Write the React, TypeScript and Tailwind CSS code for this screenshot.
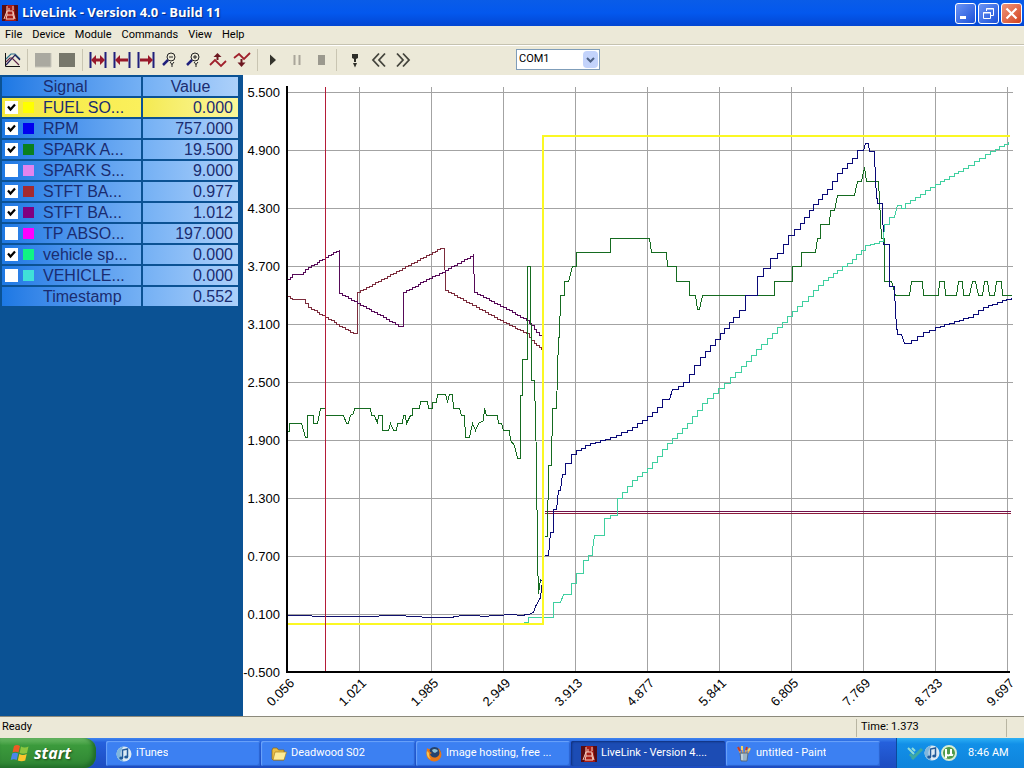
import { useState } from "react"
import type { ReactNode } from "react"

type Point = [number, number]

type Signal = {
  name: string
  value: string
  color: string
  checked: boolean
}

const signals: Signal[] = [
  { name: "FUEL SO...", value: "0.000", color: "bg-[#ffff00]", checked: true },
  { name: "RPM", value: "757.000", color: "bg-[#0000f0]", checked: true },
  { name: "SPARK A...", value: "19.500", color: "bg-[#0a8020]", checked: true },
  { name: "SPARK S...", value: "9.000", color: "bg-[#e284ee]", checked: false },
  { name: "STFT BA...", value: "0.977", color: "bg-[#a52a2f]", checked: true },
  { name: "STFT BA...", value: "1.012", color: "bg-[#800080]", checked: true },
  { name: "TP ABSO...", value: "197.000", color: "bg-[#ff00ff]", checked: false },
  { name: "vehicle sp...", value: "0.000", color: "bg-[#10f584]", checked: true },
  { name: "VEHICLE...", value: "0.000", color: "bg-[#40e0d8]", checked: false },
]

const menus = ["File", "Device", "Module", "Commands", "View", "Help"]

const yLabels = ["5.500", "4.900", "4.300", "3.700", "3.100", "2.500", "1.900", "1.300", "0.700", "0.100", "-0.500"]
const xLabels = ["0.056", "1.021", "1.985", "2.949", "3.913", "4.877", "5.841", "6.805", "7.769", "8.733", "9.697"]

// Fuel trim before the loop opens
const purple: Point[] = [
  [287, 279], [292, 274], [300, 274], [308, 267], [325, 257], [339, 249], [339, 293], [357, 303], [380, 315],
  [398, 326], [403, 326], [403, 292], [432, 276], [445, 270], [473, 254], [474, 292], [503, 307], [526, 320],
  [531, 325], [536, 332], [542, 337],
]

const brown: Point[] = [
  [287, 296], [292, 299], [301, 299], [308, 307], [325, 317], [345, 329], [353, 333], [357, 333], [357, 292],
  [432, 252], [440, 248], [444, 248], [445, 290], [503, 322], [526, 333], [531, 340], [536, 345], [541, 349],
]

const rpmIdle: Point[] = [
  [287, 615], [305, 615], [318, 616], [345, 616], [372, 616], [385, 615], [398, 615], [412, 616], [430, 617],
  [450, 617], [462, 615], [475, 615], [483, 616], [495, 615], [512, 614], [520, 615], [528, 614], [533, 612],
  [535, 606], [540, 597], [542, 580], [539, 580],
]

const rpm: Point[] = [
  [544, 555], [548, 555], [550, 532], [553, 532], [553, 509], [556, 509], [558, 490], [560, 490], [562, 474],
  [565, 474], [565, 463], [571, 463], [571, 454], [576, 454], [576, 450], [585, 445], [610, 437], [627, 430],
  [647, 416], [662, 403], [662, 399], [669, 399], [672, 389], [683, 382], [700, 357], [720, 333], [733, 317],
  [745, 303], [745, 295], [751, 295], [757, 276], [763, 268], [770, 258], [777, 253], [788, 235], [800, 223],
  [813, 204], [827, 189], [837, 173], [852, 158], [857, 150], [863, 150], [865, 143], [868, 143], [869, 151],
  [874, 151], [875, 182], [877, 203], [882, 203], [883, 244], [889, 244], [889, 286], [894, 287], [895, 313],
  [897, 334], [901, 334], [904, 343], [911, 340], [923, 332], [935, 327], [968, 317], [983, 307], [1011, 297],
]

const sparkBefore: Point[] = [
  [287, 431], [289, 431], [289, 423], [301, 423], [305, 437], [307, 437], [307, 415], [313, 415], [313, 423],
  [317, 423], [320, 408], [325, 408], [325, 415], [343, 415], [346, 423], [348, 423], [350, 415], [353, 413],
  [354, 408], [370, 408], [371, 415], [374, 415], [377, 423], [378, 415], [382, 415], [382, 430], [388, 430],
  [390, 423], [393, 430], [396, 430], [397, 423], [402, 423], [403, 415], [405, 415], [406, 423], [410, 415],
  [412, 415], [412, 408], [419, 408], [420, 401], [427, 401], [428, 408], [432, 408], [432, 402], [436, 402],
  [437, 394], [445, 394], [447, 401], [449, 394], [452, 394], [453, 408], [459, 408], [461, 415], [464, 415],
  [465, 437], [469, 437], [472, 423], [475, 430], [478, 423], [483, 420], [484, 408], [486, 415], [497, 415],
  [498, 423], [501, 423], [503, 430], [509, 430], [510, 440], [514, 445], [517, 458], [520, 458], [520, 395],
  [522, 395], [522, 359], [527, 359], [527, 266], [530, 266], [531, 380], [534, 380], [536, 460], [537, 557],
  [538, 593], [540, 579],
]

const sparkAfter: Point[] = [
  [544, 536], [547, 536], [548, 465], [551, 465], [552, 408], [556, 408], [558, 337], [559, 337], [560, 295],
  [564, 295], [564, 281], [568, 281], [572, 266], [576, 266], [576, 252], [610, 252], [610, 238], [649, 238],
  [651, 252], [666, 252], [667, 266], [676, 266], [676, 281], [689, 281], [689, 295], [695, 295], [697, 309],
  [699, 309], [702, 295], [774, 295], [774, 281], [792, 281], [792, 266], [801, 266], [801, 252], [815, 252],
  [817, 238], [820, 238], [820, 224], [829, 224], [830, 210], [834, 210], [837, 195], [854, 195], [857, 181],
  [861, 181], [864, 167], [866, 181], [878, 181], [881, 238], [884, 238], [884, 281], [891, 281], [895, 295],
  [909, 295], [911, 281], [922, 281], [923, 295], [938, 295], [939, 281], [944, 281], [945, 295], [956, 295],
  [958, 281], [962, 281], [963, 295], [969, 295], [972, 281], [975, 281], [978, 295], [982, 295], [984, 281],
  [987, 281], [989, 295], [994, 295], [996, 281], [1001, 281], [1002, 295], [1011, 295],
]

const speed: Point[] = [
  [523, 622], [528, 617], [553, 617], [553, 602], [560, 602], [563, 594], [571, 594], [571, 583], [576, 573],
  [583, 560], [592, 549], [594, 535], [599, 535], [604, 518], [610, 515], [617, 498], [632, 480], [647, 468],
  [667, 443], [687, 423], [702, 403], [718, 388], [730, 377], [751, 355], [777, 327], [792, 311], [823, 280],
  [847, 263], [865, 245], [883, 240], [884, 224], [889, 217], [894, 217], [897, 205], [901, 208], [905, 208],
  [905, 203], [935, 184], [963, 168], [990, 151], [1008, 141],
]

// Plain line through the points
const line = (points: Point[]) => points.map(([x, y]) => `${x},${y}`).join(" ")

// Sampled line: sloped runs longer than one sample become steps
const stairs = (points: Point[], step: number) => {
  const out: Point[] = [points[0]]
  for (let i = 1; i < points.length; i++) {
    const [x0, y0] = points[i - 1]
    const [x1, y1] = points[i]
    const n = Math.round((x1 - x0) / step)
    if (n < 1 || y0 === y1 || x1 - x0 < 4) {
      out.push([x1, y1])
      continue
    }
    for (let k = 1; k <= n; k++) {
      const x = Math.round(x0 + ((x1 - x0) * k) / n)
      const y = Math.round(y0 + ((y1 - y0) * k) / n)
      out.push([x, out[out.length - 1][1]])
      out.push([x, y])
    }
  }
  return line(out)
}

function Chart() {
  return (
    <svg viewBox="243 75 781 641" className="block h-auto w-full bg-white" role="img" aria-label="Signal chart">
      <g stroke="#a3a3a3" strokeWidth="1" shapeRendering="crispEdges">
        {yLabels.slice(0, -1).map((label, i) => (
          <line key={label} x1="287" x2="1013" y1={92.5 + i * 58} y2={92.5 + i * 58} />
        ))}
        {xLabels.slice(1).map((label, i) => (
          <line key={label} x1={359.5 + i * 72} x2={359.5 + i * 72} y1="87" y2="672" />
        ))}
      </g>
      <g fill="none" strokeWidth="1" shapeRendering="crispEdges" transform="translate(0.5 0.5)">
        <polyline points={stairs(brown, 3)} stroke="#7c2c3c" />
        <polyline points={stairs(purple, 3)} stroke="#560a58" />
        <polyline points="544,511 1010,511" stroke="#70104c" />
        <polyline points="544,513 1010,513" stroke="#8c1c3c" />
        <polyline points={line(sparkBefore)} stroke="#156b20" />
        <polyline points={line(sparkAfter)} stroke="#156b20" />
        <polyline points={line(rpmIdle)} stroke="#10106e" />
        <polyline points={stairs(rpm, 5)} stroke="#0a0a78" />
        <polyline points={stairs(speed, 5)} stroke="#3fd0a0" />
      </g>
      <polyline points="288,624 543,624 543,136 1010,136" fill="none" stroke="#fbf824" strokeWidth="2" shapeRendering="crispEdges" />
      <rect x="325" y="87" width="1" height="585" fill="#b41c38" shapeRendering="crispEdges" />
      <path d="M287 86V672H1010" fill="none" stroke="#000" strokeWidth="2" shapeRendering="crispEdges" />
      <g fontFamily="Liberation Sans, Arial, sans-serif" fontSize="13" fill="#000" textAnchor="end">
        {yLabels.map((label, i) => (
          <text key={label} x="280" y={97 + i * 58}>{label}</text>
        ))}
        {xLabels.map((label, i) => (
          <text key={label} transform={`translate(${295 + i * 72} 684) rotate(-45)`}>{label}</text>
        ))}
      </g>
    </svg>
  )
}

function LiveLinkIcon() {
  return (
    <svg viewBox="0 0 16 16" className="size-4 shrink-0" aria-hidden="true">
      <rect width="16" height="16" fill="#a81c14" />
      <path d="M0 0H5L3 16H0zM12 0H16V16H14z" fill="#5a0c10" />
      <path d="M5 1V6M11 1V5M5 6L2 14M11 7L13 14M5 6H11V10H5zM5 10L4 14H12L11 10M7 3V6" fill="none" stroke="#f6cfc0" strokeWidth="1" />
    </svg>
  )
}

function NoteIcon() {
  return (
    <svg viewBox="0 0 16 16" className="size-4 shrink-0" aria-hidden="true">
      <circle cx="8" cy="8" r="7.5" fill="#dceaf4" />
      <path d="M8 .5A7.500 7.500 0 0 0 8 15.500A10 10 0 0 1 8 .5z" fill="#7fb6dd" />
      <path d="M6.500 12V4L11.500 3V11" fill="none" stroke="#225b9b" strokeWidth="1.500" />
      <ellipse cx="5.200" cy="12" rx="2" ry="1.500" fill="#225b9b" />
      <ellipse cx="10.200" cy="11" rx="2" ry="1.500" fill="#225b9b" />
    </svg>
  )
}

function FolderIcon() {
  return (
    <svg viewBox="0 0 16 16" className="size-4 shrink-0" aria-hidden="true">
      <path d="M1 4L2 2H6L7.500 4H13V14H2L1 13z" fill="#e9bd45" stroke="#8a6410" strokeWidth=".7" />
      <path d="M4 6H15.500L13 14H2z" fill="#fdeb96" stroke="#a97f1c" strokeWidth=".7" />
    </svg>
  )
}

function FirefoxIcon() {
  return (
    <svg viewBox="0 0 16 16" className="size-4 shrink-0" aria-hidden="true">
      <circle cx="8.500" cy="7.500" r="6.500" fill="#26426b" />
      <path d="M6 4C8 2 11 3 12 5L9 7L7 6z" fill="#8fc0d4" />
      <path d="M1 2C2 3 3 3 4 3C3 5 4 6 6 7L4 8C5 12 10 13 13 9C14 7 13 4 12 2C16 5 17 11 12 14.500C7 17 1 14 .5 9C.2 6 1 4 1 2z" fill="#e87817" />
      <path d="M1 5C0 9 2 12 5 13.500C3 11 3 9 3 7z" fill="#f8c34b" />
    </svg>
  )
}

function PaintIcon() {
  return (
    <svg viewBox="0 0 16 16" className="size-4 shrink-0" aria-hidden="true">
      <path d="M5 8L2 2M7 8L6 1M9 8L11 1M11 8L14 3" stroke="#d9a060" strokeWidth="1.600" />
      <path d="M2 1L4 5M11 1L10 4" stroke="#c83a28" strokeWidth="2" />
      <path d="M6 0V4M14 2L12 5" stroke="#f1d463" strokeWidth="2" />
      <path d="M4 7H12L11 15H5z" fill="#9db4c4" stroke="#52616e" strokeWidth=".8" />
      <path d="M6 8V14" stroke="#e6f0f4" />
    </svg>
  )
}

function WindowsFlag() {
  return (
    <svg viewBox="0 0 20 18" className="h-[18px] w-5 shrink-0" aria-hidden="true">
      <path d="M4 2Q7 0 10 2L8.500 8.500Q5.500 7 2.500 8.500z" fill="#ee5a24" />
      <path d="M11 2.500Q14.500 4.500 18.500 2.500L17 9Q13 10.500 9.600 9z" fill="#8cc63f" />
      <path d="M2.200 9.600Q5 8 8.200 9.600L6.700 16Q3.700 14.500 .7 16z" fill="#4b86ea" />
      <path d="M9.300 10Q13 12 16.700 10L15.200 16.500Q11.500 18 7.800 16.500z" fill="#fbc52d" />
    </svg>
  )
}

function ToolButton({ label, children }: { label: string; children: ReactNode }) {
  return (
    <button type="button" aria-label={label} title={label} className="flex h-6 w-6 items-center justify-center">
      <svg viewBox="0 0 18 18" className="size-[18px]" fill="none" aria-hidden="true">
        {children}
      </svg>
    </button>
  )
}

function Separator() {
  return (
    <div className="flex w-[7px] justify-center">
      <div className="h-[22px] w-px bg-[#c9c5b2]" />
    </div>
  )
}

function Toolbar() {
  return (
    <div className="flex h-[30px] items-center border-t border-white bg-[#ece9d8] pb-[2px]">
      <ToolButton label="Chart">
        <path d="M2.500 2V15.500H17" stroke="#111" />
        <path d="M3 8L8 3L12 3L17 8" stroke="#2a6f8a" strokeWidth="1.200" />
        <path d="M3 14L12 4L17 9" stroke="#23205a" strokeWidth="1.200" />
        <path d="M3 11L7 7H9L16 14" stroke="#5c2348" strokeWidth="1.200" />
      </ToolButton>
      <Separator />
      <ToolButton label="Light panel">
        <path d="M1 2H17V16H1z" fill="#aaa9a0" />
        <path d="M1 16H17V2" stroke="#c8c6ba" />
      </ToolButton>
      <ToolButton label="Dark panel">
        <path d="M1 2H17V16H1z" fill="#77776b" />
      </ToolButton>
      <Separator />
      <ToolButton label="Expand both">
        <path d="M1.500 1V17M16.500 1V17" stroke="#20207c" strokeWidth="2" />
        <path d="M2 9L7 4V7.500H11V4L16 9L11 14V10.500H7V14z" fill="#98182a" />
      </ToolButton>
      <ToolButton label="Expand left">
        <path d="M1.500 1V17M16.500 1V17" stroke="#20207c" strokeWidth="2" />
        <path d="M2 9L7 4V7.500H15V10.500H7V14z" fill="#98182a" />
      </ToolButton>
      <ToolButton label="Expand right">
        <path d="M1.500 1V17M16.500 1V17" stroke="#20207c" strokeWidth="2" />
        <path d="M16 9L11 4V7.500H3V10.500H11V14z" fill="#98182a" />
      </ToolButton>
      <ToolButton label="Zoom out">
        <circle cx="10" cy="6" r="4" stroke="#222" />
        <path d="M8 6H12M9 11L11 13.500L13 11M11 13V16" stroke="#222" />
        <path d="M7 9L2 14" stroke="#20207c" strokeWidth="2.500" />
      </ToolButton>
      <ToolButton label="Zoom in">
        <circle cx="10" cy="6" r="4" stroke="#222" />
        <path d="M8 6H12M10 4V8M9 11L11 13.500L13 11M11 13V16" stroke="#222" />
        <path d="M7 9L2 14" stroke="#20207c" strokeWidth="2.500" />
      </ToolButton>
      <ToolButton label="Shift up">
        <path d="M1 14L6 9L12 15L17 10" stroke="#a0202c" strokeWidth="1.800" />
        <path d="M4.500 6L8.500 2L12.500 6z" fill="#6c1720" />
        <path d="M8.500 5V9" stroke="#6c1720" strokeWidth="2" />
      </ToolButton>
      <ToolButton label="Shift down">
        <path d="M1 7L6 3L11 8L17 2" stroke="#a0202c" strokeWidth="1.800" />
        <path d="M4.500 11.500L8.500 16L12.500 11.500z" fill="#6c1720" />
        <path d="M8.500 8V12" stroke="#6c1720" strokeWidth="2" />
      </ToolButton>
      <Separator />
      <ToolButton label="Play">
        <path d="M6 3.500L12 9L6 14.500z" fill="#33332c" />
      </ToolButton>
      <ToolButton label="Pause">
        <path d="M6.500 4V14M11.500 4V14" stroke="#a9a69a" strokeWidth="2" />
      </ToolButton>
      <ToolButton label="Stop">
        <path d="M6 4H13V14H6z" fill="#9b998e" />
      </ToolButton>
      <Separator />
      <div className="flex pl-[3px]">
        <ToolButton label="Mark event">
          <path d="M6 3H12V7L10 8V11H8V8L6 7z" fill="#2e2e28" />
          <path d="M7 12H11L9 16.500z" fill="#2e2e28" />
        </ToolButton>
        <ToolButton label="Rewind">
          <path d="M9 2.500L3 9L9 15.500M15 2.500L9 9L15 15.500" stroke="#44443c" strokeWidth="1.800" />
        </ToolButton>
        <ToolButton label="Fast forward">
          <path d="M3 2.500L9 9L3 15.500M9 2.500L15 9L9 15.500" stroke="#44443c" strokeWidth="1.800" />
        </ToolButton>
      </div>
      <div className="relative ml-[101px]">
        <select aria-label="Port" defaultValue="COM1" className="block h-[21px] w-[84px] appearance-none border border-[#7f9db9] bg-white pl-[2px] text-[11px] text-black">
          <option>COM1</option>
          <option>COM2</option>
        </select>
        <span className="pointer-events-none absolute inset-y-[2px] right-[2px] flex w-[15px] items-center justify-center rounded-sm bg-[#c3d3fb]">
          <svg viewBox="0 0 9 6" className="h-[6px] w-[9px]" fill="none" aria-hidden="true">
            <path d="M1 1L4.500 4.500L8 1" stroke="#4d6185" strokeWidth="2" />
          </svg>
        </span>
      </div>
    </div>
  )
}

function SignalTable() {
  const [checked, setChecked] = useState(signals.map((s) => s.checked))

  const toggle = (index: number) => {
    setChecked(checked.map((value, i) => (i === index ? !value : value)))
  }

  return (
    <table className="w-[240px] table-fixed border-separate border-spacing-x-[2px] border-spacing-y-[2px] text-base leading-[19px] text-[#1a2c70]">
      <colgroup>
        <col className="w-[139px]" />
        <col />
      </colgroup>
      <thead>
        <tr>
          <th className="h-[19px] bg-linear-to-r from-[#1c78e4] to-[#74b0f4] p-0 pl-[41px] text-left font-normal">Signal</th>
          <th className="bg-linear-to-r from-[#74b0f4] to-[#acd0fa] p-0 font-normal">Value</th>
        </tr>
      </thead>
      <tbody>
        {signals.map((signal, i) => (
          <tr key={i}>
            <td className={`h-[19px] p-0 bg-linear-to-r ${i === 0 ? "from-[#f4e83e] to-[#fbf05c]" : "from-[#1c78e4] to-[#74b0f4]"}`}>
              <label className="flex items-center overflow-hidden whitespace-nowrap pl-[3px]">
                <span className="relative size-[13px] shrink-0">
                  <input
                    type="checkbox"
                    checked={checked[i]}
                    onChange={() => toggle(i)}
                    className="block size-[13px] appearance-none bg-white"
                  />
                  {checked[i] && (
                    <svg viewBox="0 0 13 13" className="pointer-events-none absolute inset-0 size-[13px]" fill="none" aria-hidden="true">
                      <path d="M3 5.500L5.500 8.500L10 3.500" stroke="#000" strokeWidth="2.200" />
                    </svg>
                  )}
                </span>
                <span className={`ml-[5px] size-[11px] shrink-0 ${signal.color}`} />
                <span className="ml-[9px]">{signal.name}</span>
              </label>
            </td>
            <td className={`p-0 pr-[5px] text-right bg-linear-to-r ${i === 0 ? "from-[#f4ea50] to-[#fbf79a]" : "from-[#74b0f4] to-[#acd0fa]"}`}>
              {signal.value}
            </td>
          </tr>
        ))}
        <tr>
          <td className="h-[19px] bg-linear-to-r from-[#1c78e4] to-[#74b0f4] p-0 pl-[41px]">Timestamp</td>
          <td className="bg-linear-to-r from-[#74b0f4] to-[#acd0fa] p-0 pr-[5px] text-right">0.552</td>
        </tr>
      </tbody>
    </table>
  )
}

function TitleBar() {
  const button = "flex size-[21px] items-center justify-center rounded-[3px] border border-white"
  return (
    <header className="flex h-[26px] items-center bg-linear-to-b from-[#0a5ce8] via-[#0358ee] to-[#0346d2] pl-[2px] pr-[2px] text-white">
      <LiveLinkIcon />
      <h1 className="ml-1 flex-1 font-[Open_Sans,sans-serif] text-[13px] font-bold [text-shadow:1px_1px_1px_#0a2a80]">
        LiveLink - Version 4.0 - Build 11
      </h1>
      <div className="flex gap-[2px]">
        <button type="button" aria-label="Minimize" className={`${button} bg-linear-to-br from-[#6c94f4] to-[#1a4fd8]`}>
          <svg viewBox="0 0 17 17" className="size-[17px]" aria-hidden="true"><path d="M3 11H9V14H3z" fill="#fff" /></svg>
        </button>
        <button type="button" aria-label="Restore" className={`${button} bg-linear-to-br from-[#6c94f4] to-[#1a4fd8]`}>
          <svg viewBox="0 0 17 17" className="size-[17px]" fill="none" stroke="#fff" aria-hidden="true">
            <path d="M6.500 6V3.500H13.500V10.500H11M6 4H14M3.500 7.500H10.500V13.500H3.500zM3 8H11" />
          </svg>
        </button>
        <button type="button" aria-label="Close" className={`${button} bg-linear-to-br from-[#ee9478] to-[#d2401a]`}>
          <svg viewBox="0 0 17 17" className="size-[17px]" stroke="#fff" strokeWidth="2.200" aria-hidden="true"><path d="M3.500 3.500L13.500 13.500M13.500 3.500L3.500 13.500" /></svg>
        </button>
      </div>
    </header>
  )
}

const tasks = [
  { title: "iTunes", icon: <NoteIcon />, active: false },
  { title: "Deadwood S02", icon: <FolderIcon />, active: false },
  { title: "Image hosting, free ...", icon: <FirefoxIcon />, active: false },
  { title: "LiveLink - Version 4....", icon: <LiveLinkIcon />, active: true },
  { title: "untitled - Paint", icon: <PaintIcon />, active: false },
]

function Taskbar() {
  return (
    <footer className="flex h-[30px] bg-linear-to-b from-[#3f84f0] via-[#2560dc] via-15% to-[#1d4cc0] text-[11px] text-white">
      <button
        type="button"
        className="flex w-24 shrink-0 items-center gap-1 rounded-r-xl bg-linear-to-b from-[#6bbb66] via-[#3b9a3c] via-25% to-[#2f8433] pl-[10px] shadow-[inset_-3px_-2px_4px_#1f6a28]"
      >
        <WindowsFlag />
        <span className="font-[Open_Sans,sans-serif] text-base leading-5 font-bold italic [text-shadow:1px_1px_2px_#1c4a1c]">start</span>
      </button>
      <nav className="ml-[10px] flex min-w-0 flex-1 gap-px pt-[3px] pb-[2px]">
        {tasks.map((task) => (
          <button
            key={task.title}
            type="button"
            className={`flex min-w-0 max-w-[154px] flex-1 items-center gap-1 rounded-[2px] pl-[10px] ${
              task.active
                ? "bg-[#1c4cb4] shadow-[inset_1px_1px_2px_#10307c]"
                : "bg-[#3c80f2] shadow-[inset_1px_1px_1px_#6ca4fa,inset_-1px_-1px_1px_#2a62d0]"
            }`}
          >
            {task.icon}
            <span className="truncate">{task.title}</span>
          </button>
        ))}
      </nav>
      <div className="flex w-32 shrink-0 items-center border-l border-[#0c4a9c] bg-linear-to-b from-[#2cb0f4] via-[#1290e8] via-20% to-[#0f84dc] pl-[10px]">
        <svg viewBox="0 0 16 16" className="size-4" fill="none" aria-hidden="true">
          <path d="M1 3L7 9M5 3L8 6" stroke="#8fdcd8" strokeWidth="2" />
          <path d="M5 14L15 4M3 9L7 13" stroke="#3fa8a0" strokeWidth="3" />
        </svg>
        <div className="ml-px"><NoteIcon /></div>
        <svg viewBox="0 0 16 16" className="ml-px size-4" fill="none" aria-hidden="true">
          <circle cx="8" cy="8" r="7" fill="#4e9a48" stroke="#d8ecd2" strokeWidth="2" />
          <path d="M5 13V4M5 9Q7 12 10 9V4M10 9L12 10.500" stroke="#fff" strokeWidth="2" />
        </svg>
        <time className="ml-[11px]">8:46 AM</time>
      </div>
    </footer>
  )
}

export default function App() {
  return (
    <div className="flex min-h-screen flex-col bg-[#ece9d8] font-[Roboto,sans-serif] text-[11px] text-black">
      <TitleBar />
      <nav className="flex h-[19px] items-center gap-[10px] border-b border-[#c5c2b0] pl-[5px]">
        {menus.map((menu) => (
          <button key={menu} type="button">{menu}</button>
        ))}
      </nav>
      <Toolbar />
      <main className="flex flex-1 bg-white">
        <aside className="w-[243px] shrink-0 bg-[#0b5294] font-['Liberation_Sans',Arial,sans-serif]">
          <SignalTable />
        </aside>
        <div className="min-w-0 flex-1">
          <Chart />
        </div>
      </main>
      <div className="flex h-[22px] items-center border-t border-[#8c8a7c]">
        <span className="flex-1 pl-[2px]">Ready</span>
        <span className="flex h-[18px] w-[150px] items-center border-l border-[#b8b5a2] pl-1">Time: 1.373</span>
        <span className="h-[18px] w-[18px] border-l border-[#b8b5a2]" />
      </div>
      <Taskbar />
    </div>
  )
}
